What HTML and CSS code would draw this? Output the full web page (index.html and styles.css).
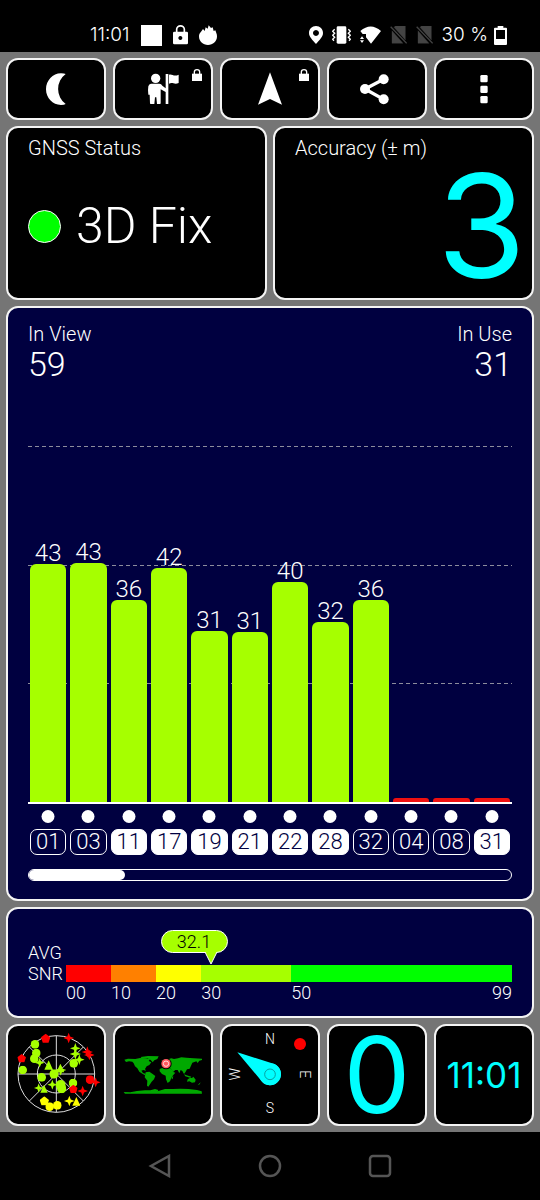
FILE: index.html
```html
<!DOCTYPE html>
<html lang="en">
<head>
<meta charset="utf-8">
<meta name="viewport" content="width=device-width, initial-scale=1">
<title>GNSS Status</title>
<link rel="stylesheet" href="styles.css">
</head>
<body>
<svg class="defs" aria-hidden="true">
  <symbol id="lock" viewBox="0 0 30 36"><path d="M0 14h30v22H0z"/><path d="M7 15V9a8 7 0 0 1 16 0v6" fill="none" stroke="#fff" stroke-width="4"/></symbol>
  <symbol id="dot" viewBox="-13 -13 26 26"><circle r="13"/></symbol>
  <symbol id="tri" viewBox="-13 -13 26 26"><path d="M0-14 12 12H-12z"/></symbol>
  <symbol id="star" viewBox="-15 -15 30 30"><path d="M0-15 4-4 15 0 4 4 0 15-4 4-15 0-4-4z"/></symbol>
  <symbol id="pent" viewBox="-13 -13 26 26"><path d="M0-13 13-3 8 12H-8L-13-3z"/></symbol>
</svg>

<header class="statusbar">
  <div class="status-group">
    <span>11:01</span>
    <svg width="21" height="21" viewBox="0 0 21 21"><path d="M0 0h21v21H0z"/></svg>
    <svg width="15" height="20" viewBox="0 0 45 60"><path fill-rule="evenodd" d="M4 20h37q4 0 4 4v30q0 4-4 4H4q-4 0-4-4V24q0-4 4-4zM22 33a6 6 0 1 0 .1 0z"/><path d="M11 22V13a11 10 0 0 1 23 0v9" fill="none" stroke="#fff" stroke-width="5"/></svg>
    <svg width="18" height="20" viewBox="0 0 54 60"><path d="M5 22 12 12l5 6 3-11 6 4 3-10 7 8 5-2 3 11 5-2c2 6 5 11 5 18 0 16-12 26-27 26S0 50 0 34c0-5 2-9 5-12z"/></svg>
  </div>
  <div class="status-group">
    <svg width="14" height="18" viewBox="0 0 42 54"><path fill-rule="evenodd" d="M21 0C9 0 0 9 0 21c0 12 10 20 21 33 11-13 21-21 21-33C42 9 33 0 21 0zm0 12a9 9 0 1 1-.1 0z"/></svg>
    <svg width="19" height="18" viewBox="0 0 57 54"><rect x="14" y="1" width="29" height="52" rx="4"/><path d="m8 10-6 6 6 6-6 6 6 6-6 6 4 4M49 10l6 6-6 6 6 6-6 6 6 6-4 4" fill="none" stroke="#fff" stroke-width="4"/></svg>
    <svg width="21" height="18" viewBox="0 0 63 54"><path d="M1 15Q32-12 63 15L33 53 18 34V24H8zM0 39l6-8 6 8zM0 43h12l-6 8z"/></svg>
    <svg class="dim" width="17" height="18" viewBox="0 0 51 54"><path d="M16 0h30v42L12 4zM6 14l33 38H6z"/><path d="M2 2 50 52" stroke-width="4"/></svg>
    <svg class="dim" width="17" height="18" viewBox="0 0 51 54"><path d="M16 0h30v42L12 4zM6 14l33 38H6z"/><path d="M2 2 50 52" stroke-width="4"/></svg>
    <span class="battery">30 %
      <svg width="13" height="19" viewBox="0 0 39 57"><path fill-rule="evenodd" d="M11 0h17v5h8q3 0 3 3v46q0 3-3 3H3q-3 0-3-3V8q0-3 3-3h8zM6 12v27h27V12z"/></svg></span>
  </div>
</header>

<main class="app">
  <nav class="tiles toolbar">
    <button class="tile" aria-label="Night mode"><svg width="26" height="34" viewBox="129 216 78 102"><path d="M197 222a56 56 0 0 0 0 90q-4 3-14 3c-25 0-45-21-45-47s20-48 45-48q10 0 14 2z"/></svg></button>
    <button class="tile" aria-label="Waypoints"><svg width="34" height="34" viewBox="438 216 102 102"><circle cx="467" cy="235" r="14"/><path d="M453 251h25q6 0 9 6l10 8v11l-15-8v42q0 2-2 2h-9l-2-20h-4l-2 20h-11q-2 0-2-2l-1-26h-4q-2-14 0-25 2-8 8-8zM497 222h8v90h-8z"/><path d="M507 224c10-3 14 7 29 0v25c-14 6-18-4-29 2z"/></svg><svg class="badge" width="10" height="12"><use href="#lock"/></svg></button>
    <button class="tile" aria-label="Navigate"><svg width="26" height="34" viewBox="771 216 78 102"><path d="M810 217 846 314 810 297 774 314z"/></svg><svg class="badge" width="10" height="12"><use href="#lock"/></svg></button>
    <button class="tile" aria-label="Share"><svg width="34" height="34" viewBox="270 216 102 102"><path d="M341 238 285 267 341 298" fill="none" stroke="#fff" stroke-width="10"/><circle cx="285" cy="267" r="15"/><circle cx="341" cy="238" r="15"/><circle cx="341" cy="298" r="15"/></svg></button>
    <button class="tile" aria-label="Menu"><svg width="10" height="34" viewBox="627 216 30 102"><rect x="631" y="225" width="22" height="22" rx="4"/><rect x="631" y="257" width="22" height="22" rx="4"/><rect x="631" y="288" width="22" height="22" rx="4"/></svg></button>
  </nav>

  <section class="cards">
    <article class="card">
      <h2 class="label">GNSS Status</h2>
      <p class="fix"><span class="led"></span>3D Fix</p>
    </article>
    <article class="card">
      <h2 class="label">Accuracy (± m)</h2>
      <p class="accuracy">3</p>
    </article>
  </section>

  <section class="panel satellites">
    <div class="counts">
      <div><h2 class="label">In View</h2><p class="count">59</p></div>
      <div class="right"><h2 class="label">In Use</h2><p class="count">31</p></div>
    </div>
    <div class="plot">
      <div class="gridlines"><i></i><i></i><i></i></div>
      <div class="columns bars">
        <div class="bar-col">43<div class="bar" style="height:238px"></div></div>
        <div class="bar-col">43<div class="bar" style="height:239px"></div></div>
        <div class="bar-col">36<div class="bar" style="height:202px"></div></div>
        <div class="bar-col">42<div class="bar" style="height:234px"></div></div>
        <div class="bar-col">31<div class="bar" style="height:171px"></div></div>
        <div class="bar-col">31<div class="bar" style="height:170px"></div></div>
        <div class="bar-col">40<div class="bar" style="height:220px"></div></div>
        <div class="bar-col">32<div class="bar" style="height:180px"></div></div>
        <div class="bar-col">36<div class="bar" style="height:202px"></div></div>
        <div class="bar-col"><div class="bar none" style="height:4px"></div></div>
        <div class="bar-col"><div class="bar none" style="height:4px"></div></div>
        <div class="bar-col"><div class="bar none" style="height:4px"></div></div>
      </div>
    </div>
    <div class="columns ids">
      <span class="id">01</span><span class="id">03</span><span class="id used">11</span><span class="id used">17</span><span class="id used">19</span><span class="id used">21</span><span class="id used">22</span><span class="id used">28</span><span class="id">32</span><span class="id">04</span><span class="id">08</span><span class="id used">31</span>
    </div>
    <div class="scroll"><div class="thumb"></div></div>
  </section>

  <section class="panel snr">
    <h2 class="snr-label">AVG<br>SNR</h2>
    <div class="gauge">
      <div class="segments">
        <i class="red"></i><i class="orange"></i><i class="yellow"></i><i class="lime"></i><i class="green"></i>
        <div class="marker" style="left:32.4%"><output class="bubble">32.1</output><svg width="12" height="13" viewBox="0 0 12 13"><path class="tip" d="M0 0 6 12 12 0"/></svg></div>
      </div>
      <div class="segments scale"><span>00</span><span>10</span><span>20</span><span>30</span><span class="ends">50<span>99</span></span></div>
    </div>
  </section>

  <nav class="tiles pages">
    <button class="tile" aria-label="Sky view"><svg class="fill" viewBox="24 21 288 294">
      <g fill="none" stroke="#ddd" stroke-width="3"><circle cx="169" cy="165" r="115"/><circle cx="169" cy="165" r="57"/><path d="M169 50v230M54 165h230M88 84l162 162M250 84 88 246"/></g>
      <g fill="#a6ff00">
        <use href="#dot" x="92" y="63" width="26" height="26"/><use href="#dot" x="96" y="89" width="26" height="26"/><use href="#dot" x="90" y="106" width="26" height="26"/><use href="#dot" x="55" y="140" width="26" height="26"/><use href="#dot" x="112" y="162" width="26" height="26"/><use href="#dot" x="148" y="151" width="28" height="28"/><use href="#dot" x="208" y="120" width="26" height="26"/><use href="#dot" x="167" y="183" width="30" height="30"/><use href="#dot" x="171" y="195" width="28" height="28"/><use href="#dot" x="206" y="179" width="26" height="26"/>
        <use href="#tri" x="132" y="124" width="28" height="30"/><use href="#tri" x="168" y="134" width="26" height="28"/><use href="#tri" x="120" y="198" width="24" height="24"/>
        <use href="#star" x="210" y="72" width="32" height="32"/><use href="#star" x="209" y="88" width="34" height="34"/><use href="#star" x="222" y="106" width="32" height="32"/><use href="#star" x="104" y="116" width="30" height="30"/><use href="#star" x="102" y="193" width="28" height="28"/><use href="#star" x="142" y="182" width="30" height="30"/><use href="#star" x="165" y="136" width="34" height="34"/>
      </g>
      <g fill="#f00"><use href="#pent" x="123" y="44" width="28" height="28"/><use href="#pent" x="52" y="105" width="26" height="26"/><use href="#pent" x="207" y="197" width="26" height="26"/><use href="#dot" x="257" y="169" width="26" height="26"/><use href="#star" x="190" y="41" width="32" height="32"/><use href="#star" x="245" y="82" width="34" height="34"/><use href="#star" x="252" y="92" width="32" height="32"/><use href="#star" x="272" y="175" width="30" height="30"/><use href="#star" x="232" y="200" width="32" height="32"/></g>
      <g fill="#ff0"><use href="#pent" x="119" y="232" width="28" height="28"/><use href="#dot" x="136" y="250" width="26" height="26"/><use href="#dot" x="159" y="246" width="26" height="26"/><use href="#star" x="192" y="230" width="32" height="32"/><use href="#tri" x="216" y="234" width="26" height="28"/></g>
    </svg></button>
    <button class="tile" aria-label="World map"><svg class="fill" viewBox="15 21 288 294">
      <g fill="#00a800"><path d="M43 122l11-3 22 1 14-3 18 1 12 3-4 5 8 4-6 8-8 4-5 8 3 5-8-2-6 2 5 7 7 2-1 5-8-5-9-6-6-10-7-6-4-9-4-5-10-1-9 2z"/><path d="M92 114l22-3 32 1-4 8-9 4-5 6-6-7-10-5-16 1zM107 160l11-2 10 7 8 6-4 10-7 7-5 8-5 7-4-3 1-15-8-10z"/><path d="M149 150l10-4 14 2 12 3 5 8 6 2-8 9-5 9-3 8-7 5-5-11-1-11-11-5-7-8z"/><path d="M153 142l4-8 10-3 7-10 10-3 8 2 12-2 10-3 15 1 22 2 25 1v4l-8 2-5 7-4-5-12 4-4 9-4 9-8 2-4 7-5 7-5-9-5-3-4 10-5-10-7 0-7 6-6-10-8 0-6-5-10 3z"/><path d="M222 166l8 3 14 4-4 3-14-4zM233 181l8-5 5 1 4-4 7 9-2 8-9 1-8-4-7 1zM267 194l5-4-3 6-6 3zM186 174l4-3-2 9-3 1zM152 127l5-5v8z"/><path d="M41 219l20 1 20-4 24-2 16 0 14-4 10 3-2 4 22-7 24 0 22-1 25 1 25 3 14 4 1 7H45z"/></g>
      <circle cx="168" cy="134" r="17" fill="#000"/><circle cx="168" cy="134" r="14" fill="#ff5a60"/><circle cx="168" cy="134" r="8" fill="none" stroke="#ffd8d8" stroke-width="3"/>
    </svg></button>
    <button class="tile" aria-label="Compass"><svg class="fill compass" viewBox="21 21 288 294">
      <path d="M67 100 171 133A33 33 0 1 1 137 183z" fill="#0ff"/><circle cx="165" cy="166" r="33" fill="#0ff"/><circle cx="165" cy="166" r="16" fill="none" stroke="#08a0a0" stroke-width="3"/><circle cx="255" cy="75" r="18" fill="#f00"/>
      <text x="165" y="76">N</text><text x="165" y="283">S</text><text transform="translate(255 166) rotate(90)">E</text><text transform="translate(76 166) rotate(-90)">W</text>
    </svg></button>
    <button class="tile speed">0</button>
    <button class="tile clock">11:01</button>
  </nav>
</main>

<nav class="navbar">
  <button aria-label="Back"><svg width="24" height="24" viewBox="0 0 24 24"><path d="M21 2v20L3 12z"/></svg></button>
  <button aria-label="Home"><svg width="24" height="24" viewBox="0 0 24 24"><circle cx="12" cy="12" r="10"/></svg></button>
  <button aria-label="Recent apps"><svg width="24" height="24" viewBox="0 0 24 24"><rect x="2" y="2" width="20" height="20" rx="3"/></svg></button>
</nav>
</body>
</html>
```
FILE: styles.css
```css
* { box-sizing: border-box; }

body {
  margin: 0;
  min-height: 100vh;
  display: flex;
  flex-direction: column;
  background: #000;
  color: #fff;
  font-family: Roboto, "Liberation Sans", sans-serif;
  font-weight: 300;
  font-size: 20px;
  line-height: 24px;
}

h2, p { margin: 0; font-size: inherit; font-weight: inherit; }

button {
  padding: 0;
  border: 0;
  background: none;
  color: inherit;
  font: inherit;
}

svg { display: block; fill: #fff; }
.defs { position: absolute; width: 0; height: 0; }

/* System status bar */
.statusbar {
  height: 52px;
  padding: 18px 33px 0 90px;
  display: flex;
  justify-content: space-between;
  align-items: center;
  font-family: Inter, "Liberation Sans", sans-serif;
  font-size: 19px;
}
.status-group { display: flex; align-items: center; gap: 11px; }
.status-group + .status-group { gap: 9px; }
.battery { display: flex; align-items: center; gap: 6px; }
.dim { fill: #444; stroke: #444; }

/* App frame */
.app {
  flex: 1;
  display: flex;
  flex-direction: column;
  gap: 6px;
  padding: 6px;
  background: #757575;
}

.tile, .card, .panel {
  border: 2px solid #f4f4f4;
  border-radius: 12px;
  background: #000;
}

.tiles { display: grid; grid-template-columns: repeat(5, 1fr); gap: 7px; }
.tile {
  position: relative;
  display: flex;
  align-items: center;
  justify-content: center;
}
.toolbar .tile { height: 62px; }
.pages .tile { height: 102px; }
.badge { position: absolute; top: 9px; right: 9px; }
.fill { width: 100%; height: 100%; }

/* Status cards */
.cards { display: grid; grid-template-columns: 1fr 1fr; gap: 6px; }
.card {
  height: 174px;
  padding: 8px 6px 6px 20px;
  display: flex;
  flex-direction: column;
}
.fix {
  flex: 1;
  display: flex;
  align-items: center;
  gap: 15px;
  font-size: 50px;
}
.led {
  width: 33px;
  height: 33px;
  border: 1px solid #fff;
  border-radius: 50%;
  background: #0f0;
}
.accuracy {
  flex: 1;
  display: flex;
  align-items: center;
  justify-content: flex-end;
  color: #0ff;
  font-family: Inter, "Liberation Sans", sans-serif;
  font-weight: 400;
  font-size: 144px;
}

/* Satellite signal chart */
.panel { background: #000040; }
.satellites {
  flex: 1;
  display: flex;
  flex-direction: column;
  padding: 14px 20px 18px;
}
.counts { display: flex; justify-content: space-between; }
.right { text-align: right; }
.count { font-size: 34px; line-height: 36px; }

.plot {
  flex: 1;
  margin-top: 64px;
  display: grid;
  border-bottom: 2px solid #fff;
}
.gridlines, .bars { grid-area: 1 / 1; }
.gridlines { display: flex; flex-direction: column; }
.gridlines i {
  flex: 1;
  background: repeating-linear-gradient(90deg, #8c8c9c 0 4px, transparent 4px 7px) top / 100% 1px no-repeat;
}
.columns {
  display: grid;
  grid-template-columns: repeat(12, 1fr);
  gap: 4px;
  padding: 0 2px;
}
.bar-col {
  display: flex;
  flex-direction: column;
  justify-content: flex-end;
  text-align: center;
  font-size: 24px;
  line-height: 22px;
}
.bar { border-radius: 6px 6px 0 0; background: #a6ff00; }
.bar.none { border-radius: 3px 3px 0 0; background: #f01010; }

.ids { margin-top: 6px; }
.id {
  height: 26px;
  margin-top: 19px;
  position: relative;
  border: 1px solid #fff;
  border-radius: 7px;
  text-align: center;
  font-size: 22px;
}
.id::before {
  content: "";
  position: absolute;
  left: 50%;
  top: -20px;
  width: 13px;
  height: 13px;
  border-radius: 50%;
  background: #fff;
  translate: -50% 0;
}
.used { background: #fff; color: #000040; }

.scroll {
  height: 12px;
  margin-top: 14px;
  border: 1px solid #fff;
  border-radius: 6px;
}
.thumb { width: 20%; height: 100%; border-radius: 6px; background: #fff; }

/* Average SNR gauge */
.snr {
  height: 111px;
  padding: 33px 20px 0;
  display: grid;
  grid-template-columns: 38px 1fr;
  font-size: 18px;
}
.snr-label { line-height: 21px; }
.gauge { padding-top: 23px; }
.segments {
  position: relative;
  display: grid;
  grid-template-columns: 10fr 10fr 10fr 20fr 49fr;
}
.segments i { height: 17px; }
.scale { line-height: 22px; }
.ends { display: flex; justify-content: space-between; }
.red { background: #f00; }
.orange { background: #ff8000; }
.yellow { background: #ff0; }
.lime { background: #a6ff00; }
.green { background: #0f0; }
.marker { position: absolute; bottom: 100%; }
.bubble {
  display: block;
  width: 67px;
  height: 23px;
  margin-left: -50px;
  border: 1px solid #fff;
  border-radius: 12px;
  background: #a6ff00;
  color: #000;
  text-align: center;
  line-height: 21px;
}
.marker svg { margin: -1px 0 0 -6px; }
.tip { fill: #a6ff00; stroke: #fff; stroke-width: 1px; }

/* Page tiles */
.compass text {
  font-size: 42px;
  text-anchor: middle;
}
.speed, .clock {
  color: #0ff;
  font-family: Inter, "Liberation Sans", sans-serif;
  font-weight: 400;
}
.speed { font-size: 106px; }
.clock { font-size: 35px; }

/* System navigation bar */
.navbar {
  height: 68px;
  display: flex;
  align-items: center;
  justify-content: center;
  gap: 86px;
}
.navbar svg { fill: none; stroke: #555; stroke-width: 2.5; }
```
